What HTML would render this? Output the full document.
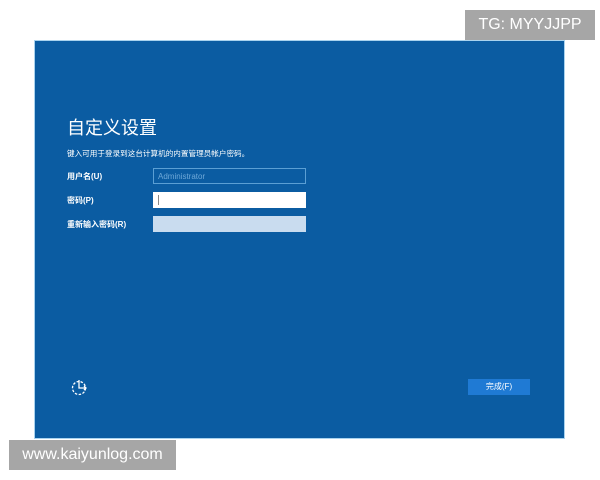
<!DOCTYPE html>
<html><head><meta charset="utf-8"><style>
body{margin:0;width:600px;height:480px;background:#fff;position:relative;overflow:hidden;font-family:"Liberation Sans","Noto Sans CJK SC",sans-serif}
.p{position:absolute;left:34px;top:40px;width:529px;height:397px;background:#0b5ca2;border:1px solid #a9d3ef}
.a{position:absolute;color:#fff}
.tag{position:absolute;background:#a6a6a6;color:#fff;font-size:16px;display:flex;align-items:center;justify-content:center}
.in{position:absolute;left:153px;width:153px;height:16px;box-sizing:border-box}
</style></head><body>
<div class="p"></div>
<div class="a" style="left:67px;top:114px;font-size:18px">自定义设置</div>
<div class="a" style="left:67px;top:148px;font-size:7.6px">键入可用于登录到这台计算机的内置管理员帐户密码。</div>
<div class="a" style="left:67px;top:171px;font-size:8px;font-weight:bold">用户名(U)</div>
<div class="a" style="left:67px;top:195px;font-size:8px;font-weight:bold">密码(P)</div>
<div class="a" style="left:67px;top:219px;font-size:8px;font-weight:bold">重新输入密码(R)</div>
<div class="in" style="top:168px;border:1px solid #5b9fd4;color:#6ea8d8;font-size:8px;padding:3px 4px">Administrator</div>
<div class="in" style="top:192px;background:#fff;"><div style="position:absolute;left:5px;top:3px;width:1px;height:10px;background:#888"></div></div>
<div class="in" style="top:216px;background:#c9dcef"></div>
<div style="position:absolute;left:468px;top:379px;width:62px;height:16px;background:#1f7ad4;color:#fff;font-size:8px;text-align:center;line-height:16px">完成(F)</div>
<svg style="position:absolute;left:71px;top:378px" width="20" height="18" viewBox="0 0 20 18"><circle cx="8" cy="10" r="6.5" fill="none" stroke="#fff" stroke-width="1.3" stroke-dasharray="2.5 1.5"/><path d="M8 2v8h7M13 8l2 2-2 2" fill="none" stroke="#fff" stroke-width="1.3"/></svg>
<div class="tag" style="left:465px;top:10px;width:130px;height:30px">TG: MYYJJPP</div>
<div class="tag" style="left:9px;top:440px;width:167px;height:30px">www.kaiyunlog.com</div>
</body></html>
